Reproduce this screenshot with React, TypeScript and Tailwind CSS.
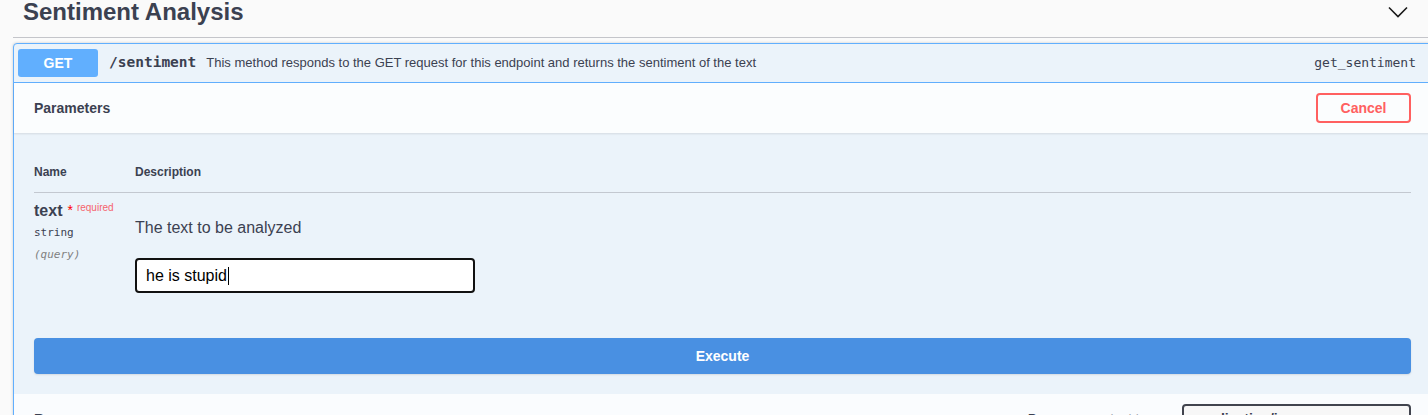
const sans = "font-['Liberation_Sans',Arial,sans-serif]";
const mono = "font-['DejaVu_Sans_Mono','Liberation_Mono',monospace]";

const Chevron = () => (
  <svg width="20" height="12" viewBox="0 0 20 12" fill="none" className="text-[#1a1a1a]">
    <path d="M1 1.5 L10 10.5 L19 1.5" stroke="currentColor" strokeWidth="1.6" />
  </svg>
);

const App = () => {
  return (
    <div className={`h-[415px] w-[1428px] overflow-hidden bg-[#fafafa] text-[#3b4151] ${sans}`}>
      <div className="ml-[13px] w-[1419px]">
        {/* tag header */}
        <div className="flex h-[38px] items-start justify-between border-b border-b-[#c4c5ca] pl-[10px] pr-[24px]">
          <h2 className="text-[24px] font-bold leading-[24px]">Sentiment Analysis</h2>
          <div className="pt-[6px]">
            <Chevron />
          </div>
        </div>

        {/* operation block */}
        <div className="mt-[5px] rounded-[4px] border border-[#61affe] bg-[#ebf3fa] shadow-[0_0_3px_rgba(0,0,0,0.19)]">
          <div className="flex items-center border-b border-b-[#61affe] py-[5px] pl-[4px] pr-[15px]">
            <span className="flex h-[28px] w-[80px] items-center justify-center rounded-[3px] bg-[#61affe] text-[14px] font-bold text-white">
              GET
            </span>
            <span className={`pl-[11px] pr-[10px] text-[14.5px] font-bold ${mono}`}>/sentiment</span>
            <span className="flex-1 text-[13px]">
              This method responds to the GET request for this endpoint and returns the sentiment of the text
            </span>
            <span className={`text-[13px] ${mono}`}>get_sentiment</span>
          </div>

          {/* parameters header */}
          <div className="flex h-[50px] items-center justify-between bg-white/80 px-[20px] shadow-[0_1px_2px_rgba(0,0,0,0.1)]">
            <h4 className="text-[14px] font-bold">Parameters</h4>
            <button className="h-[30px] w-[95px] rounded-[4px] border-2 border-[#ff6060] text-[14px] font-bold text-[#ff6060]">
              Cancel
            </button>
          </div>

          {/* parameters table */}
          <div className="px-[20px] pt-[20px]">
            <div className="flex border-b border-b-[#c3c8d0] pt-[12px] pb-[12px] text-[12px] font-bold leading-[15px]">
              <div className="w-[101px]">Name</div>
              <div>Description</div>
            </div>
            <div className="flex pt-[10px]">
              <div className="w-[101px]">
                <div className="flex items-start">
                  <span className="text-[16px] font-bold leading-[16px]">text</span>
                  <span className="ml-[5px] text-[14px] leading-[14px] text-[#ff0000]">*</span>
                  <span className="ml-[4px] -mt-[3px] text-[10px] text-[#f5646c]">required</span>
                </div>
                <div className={`mt-[6px] text-[11px] ${mono}`}>string</div>
                <div className={`mt-[5px] text-[11px] italic text-[#808080] ${mono}`}>(query)</div>
              </div>
              <div>
                <p className="mt-[16px] text-[16px] leading-[18px]">The text to be analyzed</p>
                <div className="mt-[21px] flex h-[35px] w-[340px] items-center rounded-[4px] border-2 border-[#111] bg-white px-[9px] text-[16px] text-black">
                  he is stupid
                  <span className="ml-px h-[18px] w-px bg-black" />
                </div>
              </div>
            </div>
          </div>

          {/* execute */}
          <div className="px-[20px] pt-[45px] pb-[20px]">
            <button className="h-[36px] w-full rounded-[4px] bg-[#4990e2] text-[14px] font-bold text-white shadow-[0_1px_2px_rgba(0,0,0,0.1)]">
              Execute
            </button>
          </div>

          {/* responses header */}
          <div className="flex h-[50px] items-center justify-between bg-[#fafcfe] px-[20px]">
            <h4 className="text-[14px] font-bold">Responses</h4>
            <div className="flex items-center gap-[22px]">
              <span className="text-[12px] font-bold">Response content type</span>
              <div className="flex h-[30px] w-[229px] items-center rounded-[4px] border-2 border-[#41444e] bg-[#f7f7f7] px-[12px] text-[14px] font-bold">
                application/json
              </div>
            </div>
          </div>
        </div>
      </div>
    </div>
  );
};

export default App;
